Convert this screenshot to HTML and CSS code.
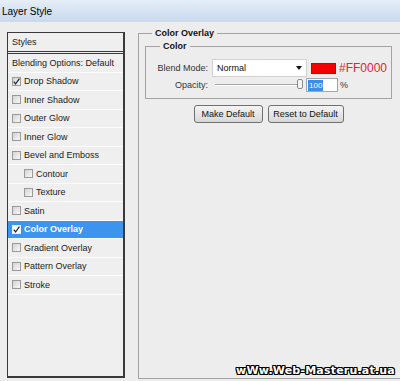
FILE: index.html
```html
<!DOCTYPE html>
<html lang="en">
<head>
    <meta charset="UTF-8">
    <title>Layer Style</title>
    <link rel="stylesheet" href="styles.css">
</head>
<body>
    <div class="titlebar">Layer Style</div>

    <div class="dialog">
        <div class="styles-panel">
            <div class="styles-head">Styles</div>
            <div class="row">Blending Options: Default</div>
            <div class="row"><span class="check"><svg viewBox="0 0 9 9"><polyline points="1.8,4.6 3.6,7 7.4,1.6"/></svg></span>Drop Shadow</div>
            <div class="row"><span class="check"></span>Inner Shadow</div>
            <div class="row"><span class="check"></span>Outer Glow</div>
            <div class="row"><span class="check"></span>Inner Glow</div>
            <div class="row"><span class="check"></span>Bevel and Emboss</div>
            <div class="row sub"><span class="check"></span>Contour</div>
            <div class="row sub"><span class="check"></span>Texture</div>
            <div class="row"><span class="check"></span>Satin</div>
            <div class="row active"><span class="check"><svg viewBox="0 0 9 9"><polyline points="1.8,4.6 3.6,7 7.4,1.6"/></svg></span>Color Overlay</div>
            <div class="row"><span class="check"></span>Gradient Overlay</div>
            <div class="row"><span class="check"></span>Pattern Overlay</div>
            <div class="row"><span class="check"></span>Stroke</div>
        </div>

        <fieldset class="overlay">
            <legend>Color Overlay</legend>
            <fieldset class="color-box">
                <legend>Color</legend>
                <div class="field">
                    <label>Blend Mode:</label>
                    <div class="select">Normal<span class="arrow"></span></div>
                    <span class="swatch"></span>
                    <span class="hex">#FF0000</span>
                </div>
                <div class="field">
                    <label>Opacity:</label>
                    <div class="slider"><span class="thumb"></span></div>
                    <span class="num"><span class="sel">100</span></span>
                    <span class="pct">%</span>
                </div>
            </fieldset>
            <div class="buttons">
                <button class="btn make">Make Default</button>
                <button class="btn reset">Reset to Default</button>
            </div>
        </fieldset>

        <div class="watermark">wWw.Web-Masteru.at.ua</div>
    </div>
</body>
</html>
```

FILE: styles.css
```css
body {
    margin: 0;
    width: 400px;
    height: 381px;
    overflow: hidden;
    background: #ededed;
    font-family: 'Liberation Sans', Arial, sans-serif;
    font-size: 9px;
    color: #1a1a1a;
}
.titlebar {
    height: 22px;
    line-height: 23px;
    padding-left: 2px;
    font-size: 10px;
    color: #000;
    background: linear-gradient(#e6eef8, #d3e1f1 60%, #c9d9ee);
}
.dialog {
    position: relative;
    display: flex;
    padding: 10px 0 0 7px;
    gap: 13px;
}
.styles-panel {
    box-sizing: border-box;
    width: 118px;
    height: 346px;
    flex-shrink: 0;
    border: 1px solid #3a3a3a;
    border-right-width: 2px;
    border-bottom-width: 2px;
    background: #efefef;
}
.styles-head {
    height: 18px;
    line-height: 18px;
    padding-left: 4px;
    border-bottom: 3px double #3a3a3a;
}
.row {
    display: flex;
    align-items: center;
    height: 17.5px;
    padding-left: 4px;
    border-bottom: 1px solid #fbfbfb;
}
.row.sub {
    padding-left: 16px;
}
.row.active {
    background: #3d94ee;
    color: #fff;
    font-weight: bold;
}
.check {
    box-sizing: border-box;
    width: 9px;
    height: 9px;
    margin-right: 3px;
    border: 1px solid #9a9a9a;
    background: linear-gradient(135deg, #d4d4d4, #f7f7f7);
    display: flex;
}
.row.active .check {
    background: #fff;
    border-color: #e8f0fa;
}
.check svg {
    width: 9px;
    height: 9px;
    margin: -1px;
    fill: none;
    stroke: #1e2a3a;
    stroke-width: 1.3;
}
.overlay {
    box-sizing: border-box;
    width: 262px;
    height: 351px;
    margin: -4px 0 0;
    padding: 0 0 0 6px;
    border: 1px solid #a3a3a3;
    border-right: none;
    flex-shrink: 0;
}
legend {
    font-weight: bold;
    line-height: 11px;
    padding: 0 3px;
    color: #111;
}
.overlay > legend {
    margin-left: 7px;
}
.color-box {
    box-sizing: border-box;
    width: 247px;
    height: 58px;
    margin: 2px 0 0;
    padding: 0;
    border: 1px solid #a3a3a3;
}
.color-box > legend {
    margin-left: 14px;
}
.field {
    display: flex;
    align-items: center;
    height: 18px;
}
.field:first-of-type {
    margin-top: 7px;
}
.field + .field {
    height: 16px;
}
.field label {
    width: 62px;
    text-align: right;
    color: #333;
}
.select {
    box-sizing: border-box;
    width: 95px;
    height: 18px;
    margin-left: 4px;
    padding-left: 4px;
    display: flex;
    align-items: center;
    justify-content: space-between;
    background: #fff;
    border: 1px solid #d2d2d2;
    color: #111;
}
.arrow {
    width: 0;
    height: 0;
    margin-right: 4px;
    border-left: 3px solid transparent;
    border-right: 3px solid transparent;
    border-top: 4px solid #111;
}
.swatch {
    box-sizing: border-box;
    width: 25px;
    height: 11px;
    margin-left: 4px;
    background: #f40000;
    border: 1px solid #d00000;
}
.hex {
    margin-left: 3px;
    font-size: 12px;
    color: #e02430;
}
.slider {
    position: relative;
    width: 88px;
    height: 1px;
    margin-left: 7px;
    background: #a8a8a8;
    border-bottom: 1px solid #fff;
}
.thumb {
    position: absolute;
    right: 0;
    top: -5px;
    box-sizing: border-box;
    width: 6px;
    height: 10px;
    border: 1px solid #8a8a8a;
    border-radius: 2px;
    background: #f4f4f4;
}
.num {
    box-sizing: border-box;
    width: 32px;
    height: 14px;
    margin-left: 3px;
    padding-left: 1px;
    display: flex;
    align-items: center;
    background: #fff;
    border: 1px solid #9aa7b8;
}
.sel {
    background: #3a8ee6;
    color: #fff;
    line-height: 11px;
    font-size: 8px;
    padding: 0 1px;
}
.pct {
    margin-left: 2px;
    color: #333;
}
.buttons {
    width: 247px;
    display: flex;
    justify-content: center;
    gap: 5px;
    margin-top: 6px;
}
.btn {
    box-sizing: border-box;
    height: 18px;
    padding: 0;
    font-family: 'Liberation Sans', Arial, sans-serif;
    font-size: 9px;
    color: #111;
    border: 1px solid #707070;
    border-radius: 3px;
    background: linear-gradient(#f4f4f4, #e6e6e6 50%, #d8d8d8);
}
.btn.make {
    width: 69px;
}
.btn.reset {
    width: 76px;
}
.watermark {
    position: absolute;
    right: 5px;
    top: 342px;
    font-family: 'DejaVu Sans', sans-serif;
    font-weight: bold;
    font-size: 11px;
    letter-spacing: 0.2px;
    color: #fff;
    text-shadow: 1px 0 #000, -1px 0 #000, 0 1px #000, 0 -1px #000,
        1px 1px #000, -1px -1px #000, 1px -1px #000, -1px 1px #000;
}
```
